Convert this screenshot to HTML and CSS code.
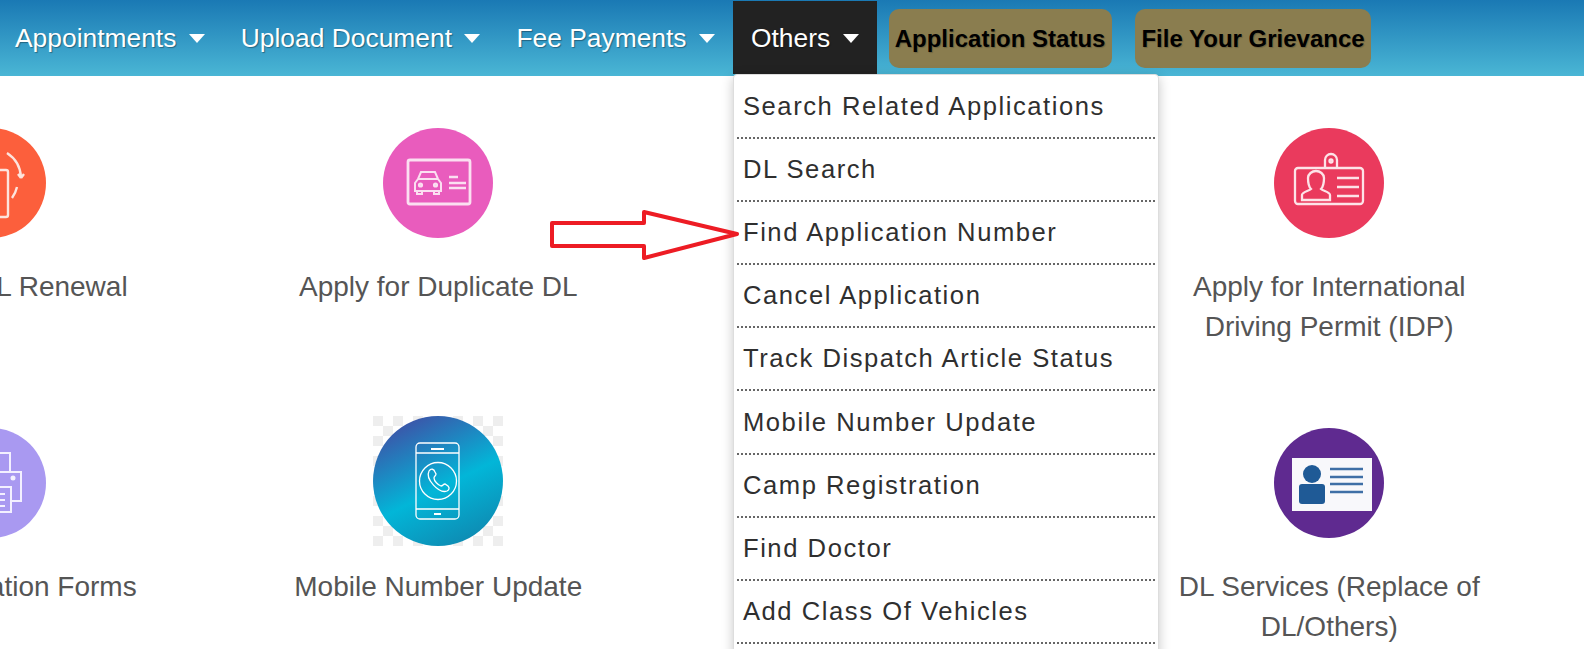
FILE: index.html
```html
<!DOCTYPE html>
<html lang="en">
<head>
<meta charset="utf-8">
<title>Driving Licence Services</title>
<link rel="stylesheet" href="styles.css">
</head>
<body>
<nav class="topnav">
  <ul class="navlist">
    <li class="navitem"><a class="navlink">Appointments<span class="caret"></span></a></li>
    <li class="navitem"><a class="navlink">Upload Document<span class="caret"></span></a></li>
    <li class="navitem"><a class="navlink">Fee Payments<span class="caret"></span></a></li>
    <li class="navitem navitem-open">
      <a class="navlink">Others<span class="caret"></span></a>
      <ul class="menu">
        <li class="menuitem">Search Related Applications</li>
        <li class="menuitem">DL Search</li>
        <li class="menuitem">Find Application Number</li>
        <li class="menuitem">Cancel Application</li>
        <li class="menuitem">Track Dispatch Article Status</li>
        <li class="menuitem">Mobile Number Update</li>
        <li class="menuitem">Camp Registration</li>
        <li class="menuitem">Find Doctor</li>
        <li class="menuitem">Add Class Of Vehicles</li>
      </ul>
    </li>
    <li class="navbtn navbtn-first">Application Status</li>
    <li class="navbtn">File Your Grievance</li>
  </ul>
</nav>

<main class="services">
  <div class="card">
    <div class="iconbox">
      <svg class="icon icon-edge" viewBox="0 0 110 110" fill="none" stroke="#fde4dd" stroke-width="2.400">
        <circle cx="55" cy="55" r="55" fill="#fc5f3c" stroke="none"/>
        <rect x="40" y="42" width="32" height="47" rx="2"/>
        <path d="M71 25a31 31 0 0 1 14 24M85 50l-3-4M85 50l3-4M81 59a30 30 0 0 1-5 11"/>
      </svg>
    </div>
    <p class="label">Apply for DL Renewal</p>
  </div>
  <div class="card">
    <div class="iconbox">
      <svg class="icon" viewBox="0 0 110 110" fill="none" stroke="#fbdff1" stroke-width="2.800">
        <circle cx="55" cy="55" r="55" fill="#e95cbd" stroke="none"/>
        <rect x="25" y="32" width="62" height="44" rx="2"/>
        <path stroke-width="2" d="M32 55v8h26v-8l-3-4-3-7H38l-3 7zM35 51h20M34 63v3h5v-3M51 63v3h5v-3"/>
        <circle cx="37.500" cy="57" r="1.200"/>
        <circle cx="52.500" cy="57" r="1.200"/>
        <path stroke-width="2.400" d="M66 49h9M66 55h17M66 60h17"/>
      </svg>
    </div>
    <p class="label">Apply for Duplicate DL</p>
  </div>
  <div class="card"></div>
  <div class="card">
    <div class="iconbox">
      <svg class="icon" viewBox="0 0 110 110" fill="none" stroke="#fde3e8" stroke-width="2.300">
        <circle cx="55" cy="55" r="55" fill="#ea3a5d" stroke="none"/>
        <rect x="21" y="40" width="68" height="36" rx="3"/>
        <path d="M51 40v-8a6 6 0 0 1 12 0v8"/>
        <circle cx="57" cy="33" r="1.500"/>
        <path d="M28 72v-5c0-3 7-4 9-6-3-3-3-8-3-11 0-4 4-7 8-7s8 3 8 7c0 3 0 8-3 11 2 2 9 3 9 6v5z"/>
        <path stroke-width="2.400" d="M63 50h22M63 59h22M63 68h22"/>
      </svg>
    </div>
    <p class="label">Apply for International Driving Permit (IDP)</p>
  </div>

  <div class="card">
    <div class="iconbox">
      <svg class="icon icon-edge" viewBox="0 0 110 110" fill="none" stroke="#f3f0ff" stroke-width="2">
        <circle cx="55" cy="55" r="55" fill="#a999f1" stroke="none"/>
        <path d="M44 44V25h30v19"/>
        <path d="M46 73H34V44h51v29H75"/>
        <rect x="47" y="59" width="28" height="25"/>
        <path d="M53 66h16M53 72h16M53 78h16"/>
        <circle cx="77" cy="50" r="1.500" fill="#fff"/>
      </svg>
    </div>
    <p class="label">Print Application Forms</p>
  </div>
  <div class="card">
    <div class="iconbox">
      <svg class="icon icon-phone" viewBox="0 0 130 130" fill="none" stroke="#fff" stroke-width="1.300">
        <defs>
          <pattern id="checks" width="20" height="20" patternUnits="userSpaceOnUse">
            <rect width="20" height="20" fill="#fff" stroke="none"/>
            <rect width="10" height="10" fill="#eee" stroke="none"/>
            <rect x="10" y="10" width="10" height="10" fill="#eee" stroke="none"/>
          </pattern>
          <linearGradient id="phonegrad" x1="0.250" y1="0" x2="0.750" y2="1">
            <stop offset="0" stop-color="#3f4fa6"/>
            <stop offset="0.550" stop-color="#02b6d8"/>
            <stop offset="1" stop-color="#0f88b0"/>
          </linearGradient>
        </defs>
        <rect width="130" height="130" fill="url(#checks)" stroke="none"/>
        <circle cx="65" cy="65" r="65" fill="url(#phonegrad)" stroke="none"/>
        <rect x="43" y="27" width="43" height="76" rx="4"/>
        <path d="M43 37h43M43 93h43"/>
        <path stroke-width="1.800" d="M58 33h13M61 98h7"/>
        <circle cx="65" cy="65" r="18.500"/>
        <path d="M56 55c2-3 5-2 6 1l1 2c0 2-2 2-2 4 0 3 4 7 7 8 2 0 2-2 4-2l3 2c2 2 1 4-1 5-8 3-22-12-18-20z"/>
      </svg>
    </div>
    <p class="label">Mobile Number Update</p>
  </div>
  <div class="card"></div>
  <div class="card">
    <div class="iconbox">
      <svg class="icon" viewBox="0 0 110 110">
        <circle cx="55" cy="55" r="55" fill="#5f2a90"/>
        <rect x="18" y="30" width="80" height="53" fill="#f8f8fb"/>
        <circle cx="38" cy="46" r="9" fill="#1f5a96"/>
        <rect x="25" y="56" width="26" height="20" rx="3" fill="#1f5a96"/>
        <path d="M56 41h33M56 49h33M56 56h33M56 64h33" stroke="#3f6fa6" stroke-width="2.400"/>
      </svg>
    </div>
    <p class="label">DL Services (Replace of DL/Others)</p>
  </div>
</main>

<svg class="arrow" width="200" height="60" viewBox="0 0 200 60" fill="none">
  <path d="M2 13h92V2l93 22-93 24V36H2z" fill="#fff" stroke="#ed1c24" stroke-width="4" stroke-linejoin="round"/>
</svg>
</body>
</html>
```
FILE: styles.css
```css
* {
  box-sizing: border-box;
}

html,
body {
  margin: 0;
  height: 649px;
  overflow: hidden;
  background: #fff;
  font-family: "Liberation Sans", Arial, sans-serif;
}

.topnav {
  height: 76px;
  background: linear-gradient(to bottom, #1a79b4 0%, #4ab6d5 100%);
}

.navlist {
  display: flex;
  align-items: flex-start;
  margin: 0 0 0 -3px;
  padding: 0;
  list-style: none;
}

.navitem {
  position: relative;
  margin-top: 1px;
}

.navlink {
  display: flex;
  align-items: center;
  height: 73px;
  padding: 2px 18px 0;
  color: #fff;
  font-size: 26.4px;
  text-shadow: 1px 1px 1px rgba(0, 0, 0, 0.35);
}

.navitem-open .navlink {
  background: #222;
}

.caret {
  margin-left: 12.4px;
  border-top: 9px solid #fff;
  border-left: 8.5px solid transparent;
  border-right: 8.5px solid transparent;
}

.navbtn {
  display: flex;
  align-items: center;
  justify-content: center;
  width: 236px;
  height: 59px;
  margin: 9px 0 0 23.5px;
  padding-top: 1px;
  border-radius: 10px;
  background: #8a7d4f;
  color: #000;
  font-size: 24px;
  font-weight: bold;
  text-shadow: 1px 1px 1px rgba(0, 0, 0, 0.2);
}

.navbtn-first {
  width: 223px;
  margin-left: 12px;
}

.menu {
  position: absolute;
  top: 100%;
  left: 0;
  z-index: 5;
  width: 426px;
  height: 600px;
  margin: 0;
  padding: 1px 3px 0;
  list-style: none;
  background: #fff;
  border-radius: 4px;
  border: 1px solid #ddd;
  box-shadow: 0 3px 12px rgba(0, 0, 0, 0.22);
}

.menuitem {
  display: flex;
  align-items: center;
  height: 63.1px;
  padding: 0 6px;
  border-bottom: 2px dotted #666;
  color: #2f2f2f;
  font-size: 25.6px;
  letter-spacing: 1.55px;
  white-space: nowrap;
}

.services {
  display: grid;
  grid-template-columns: repeat(4, 445.5px);
  grid-auto-rows: 300px;
  margin-left: -230px;
  padding-top: 42px;
}

.card {
  text-align: center;
}

.iconbox {
  display: flex;
  align-items: center;
  justify-content: center;
  height: 130px;
}

.icon {
  display: block;
  width: 110px;
  height: 110px;
}

.icon-edge {
  margin-left: -4px;
}

.icon-phone {
  width: 130px;
  height: 130px;
  margin-bottom: 4px;
}

.label {
  width: 320px;
  margin: 19px auto 0;
  color: #555;
  font-size: 28px;
  line-height: 40px;
}

.arrow {
  position: absolute;
  left: 550px;
  top: 210px;
  z-index: 6;
}
```
